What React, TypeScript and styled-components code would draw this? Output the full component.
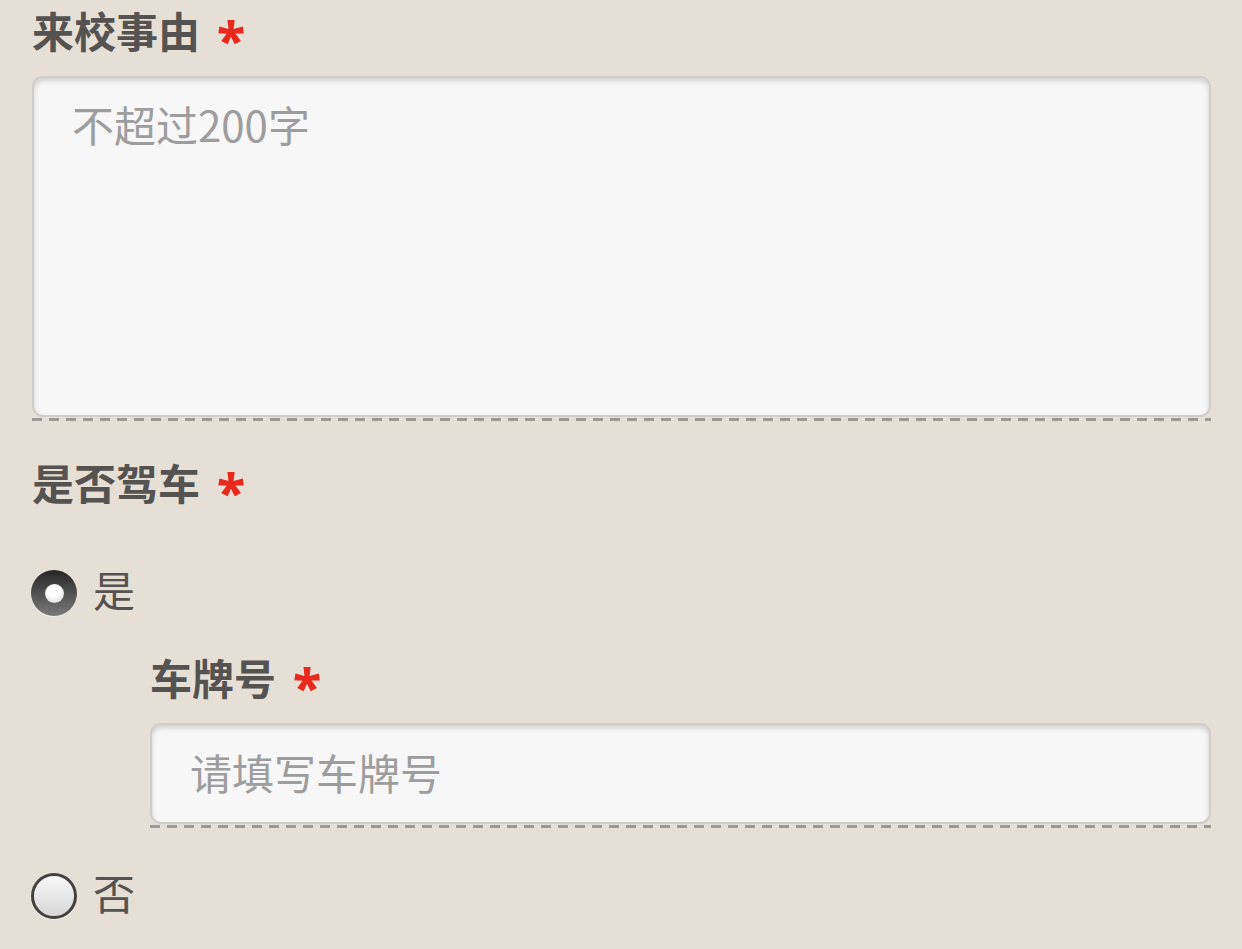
import React, { useState } from 'react';
import styled, { createGlobalStyle } from 'styled-components';

const GlobalStyle = createGlobalStyle`
  html, body {
    margin: 0;
    padding: 0;
    background: #e6dfd6;
  }
  body {
    font-family: "Noto Sans CJK SC", "Noto Sans", sans-serif;
  }
`;

const Page = styled.div`
  padding: 0 31px 0 32px;
  min-height: 949px;
  box-sizing: border-box;
`;

const Label = styled.div<{ $top?: number }>`
  display: flex;
  align-items: center;
  height: 66px;
  box-sizing: border-box;
  padding-bottom: 8px;
  margin-top: ${(p) => p.$top || 0}px;
  font-size: 42px;
  font-weight: 700;
  color: #555352;
`;

const Star = styled.span`
  margin-left: 17px;
  color: #e8291c;
  font-family: "Noto Sans", sans-serif;
  font-size: 52px;
  font-weight: 800;
  line-height: 1;
  position: relative;
  top: 10px;
`;

const Field = styled.div`
  margin-top: 10px;
  padding-bottom: 1px;
`;

const Dashes = styled.div`
  height: 3px;
  background: repeating-linear-gradient(90deg, #9c9894 0 10px, transparent 10px 17px);
`;

const boxCss = `
  display: block;
  width: 100%;
  box-sizing: border-box;
  background: #f7f7f7;
  border: 2px solid #cfcdcb;
  border-radius: 11px;
  box-shadow: inset 0 3px 5px rgba(0, 0, 0, 0.16);
  font-family: "Noto Sans CJK SC", "Noto Sans", sans-serif;
  font-size: 42px;
  color: #333;
  outline: none;
  margin: 0;
  &::placeholder {
    color: #9d9d9d;
  }
`;

const TextArea = styled.textarea`
  ${boxCss}
  height: 341px;
  padding: 18px 38px;
  line-height: 56px;
  resize: none;
`;

const Input = styled.input`
  ${boxCss}
  height: 101px;
  padding: 0 38px 4px;
`;

const Option = styled.label<{ $top?: number }>`
  display: flex;
  align-items: center;
  gap: 16px;
  height: 70px;
  margin-top: ${(p) => p.$top || 0}px;
  font-size: 42px;
  color: #555352;
  cursor: pointer;
`;

const OptionText = styled.span`
  margin-bottom: 9px;
`;

const Radio = styled.span<{ $on: boolean }>`
  width: 46px;
  height: 46px;
  box-sizing: border-box;
  border-radius: 50%;
  display: flex;
  align-items: center;
  justify-content: center;
  flex: none;
  margin-left: -1px;
  background: ${(p) =>
    p.$on ? 'linear-gradient(#262626, #7a7a7a)' : 'linear-gradient(#f8f8f8, #d6d6d6)'};
  border: ${(p) => (p.$on ? '0' : '3px solid #434140')};
  box-shadow: 0 1px 1px rgba(255, 255, 255, 0.5);
`;

const Dot = styled.span`
  width: 19px;
  height: 19px;
  border-radius: 50%;
  background: radial-gradient(circle at 45% 35%, #ffffff 0 35%, #d0d0d0 100%);
`;

const Indent = styled.div`
  padding-left: 118px;
`;

export default function App() {
  const [drive, setDrive] = useState(true);

  return (
    <Page>
      <GlobalStyle />
      <Label>
        来校事由<Star>*</Star>
      </Label>
      <Field>
        <TextArea placeholder="不超过200字" />
      </Field>
      <Dashes />

      <Label $top={31}>
        是否驾车<Star>*</Star>
      </Label>
      <Option $top={40} onClick={() => setDrive(true)}>
        <Radio $on={drive}>{drive && <Dot />}</Radio>
        <OptionText>是</OptionText>
      </Option>
      {drive && (
        <Indent>
          <Label $top={19}>
            车牌号<Star>*</Star>
          </Label>
          <Field>
            <Input placeholder="请填写车牌号" />
          </Field>
          <Dashes />
        </Indent>
      )}
      <Option $top={33} onClick={() => setDrive(false)}>
        <Radio $on={!drive}>{!drive && <Dot />}</Radio>
        <OptionText>否</OptionText>
      </Option>
    </Page>
  );
}
